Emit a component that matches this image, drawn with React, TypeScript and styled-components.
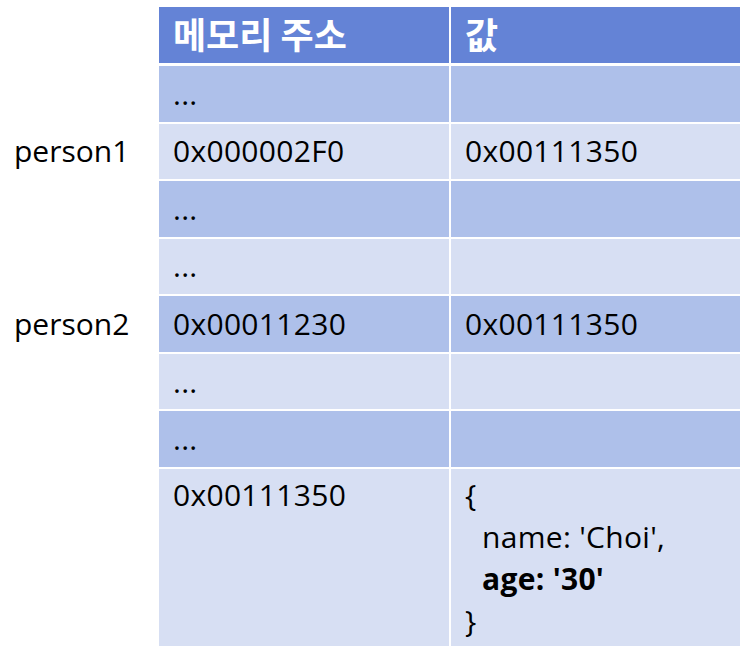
import React from "react";
import styled, { createGlobalStyle } from "styled-components";

const GlobalStyle = createGlobalStyle`
  html, body {
    margin: 0;
    padding: 0;
    background: #fff;
  }
  body {
    font-family: "Open Sans", "Noto Sans", "Noto Sans CJK KR", sans-serif;
    color: #000;
  }
`;

const Page = styled.div`
  width: 745px;
  height: 646px;
  overflow: hidden;
  padding-top: 7px;
  box-sizing: border-box;
`;

const Row = styled.div<{ $height: number }>`
  display: grid;
  grid-template-columns: 159px 290px 291px;
  height: ${(p) => p.$height}px;
`;

const HeaderRow = styled(Row)`
  border-bottom: 3px solid #fff;
  box-sizing: content-box;
`;

const Label = styled.div`
  display: flex;
  align-items: center;
  padding-left: 14px;
  font-size: 30px;
  background: #fff;
`;

const HeadCell = styled.div<{ $first?: boolean }>`
  display: flex;
  align-items: center;
  padding: 0 0 4px 14px;
  background: #6483d6;
  color: #fff;
  font-family: "Noto Sans CJK KR", sans-serif;
  font-weight: 700;
  font-size: 36px;
  border-left: ${(p) => (p.$first ? "none" : "2px solid #fff")};
`;

const Cell = styled.div<{ $dark: boolean; $first?: boolean; $top?: boolean }>`
  display: flex;
  flex-direction: column;
  justify-content: ${(p) => (p.$top ? "flex-start" : "center")};
  padding: ${(p) => (p.$top ? "5px 0 0 14px" : "0 0 0 14px")};
  background: ${(p) => (p.$dark ? "#aec0ea" : "#d7dff3")};
  border-top: 2px solid #fff;
  border-left: ${(p) => (p.$first ? "none" : "2px solid #fff")};
  font-size: 30px;
  line-height: 42px;
  letter-spacing: 0.3px;
`;

const Line = styled.div<{ $indent?: boolean; $bold?: boolean }>`
  padding-left: ${(p) => (p.$indent ? "17px" : "0")};
  font-weight: ${(p) => (p.$bold ? 700 : 400)};
  white-space: pre;
`;

const rows = [
  { label: "", addr: "...", value: "" },
  { label: "person1", addr: "0x000002F0", value: "0x00111350" },
  { label: "", addr: "...", value: "" },
  { label: "", addr: "...", value: "" },
  { label: "person2", addr: "0x00011230", value: "0x00111350" },
  { label: "", addr: "...", value: "" },
  { label: "", addr: "...", value: "" },
];

export default function App() {
  return (
    <>
      <GlobalStyle />
      <Page>
        <HeaderRow $height={54}>
          <Label />
          <HeadCell $first>메모리 주소</HeadCell>
          <HeadCell>값</HeadCell>
        </HeaderRow>
        {rows.map((r, i) => (
          <Row key={i} $height={403 / 7}>
            <Label>{r.label}</Label>
            <Cell $dark={i % 2 === 0} $first>
              {r.addr}
            </Cell>
            <Cell $dark={i % 2 === 0}>{r.value}</Cell>
          </Row>
        ))}
        <Row $height={179}>
          <Label />
          <Cell $dark={false} $first $top>
            <Line>0x00111350</Line>
          </Cell>
          <Cell $dark={false} $top>
            <Line>{"{"}</Line>
            <Line $indent>name: 'Choi',</Line>
            <Line $indent $bold>
              age: '30'
            </Line>
            <Line>{"}"}</Line>
          </Cell>
        </Row>
      </Page>
    </>
  );
}
